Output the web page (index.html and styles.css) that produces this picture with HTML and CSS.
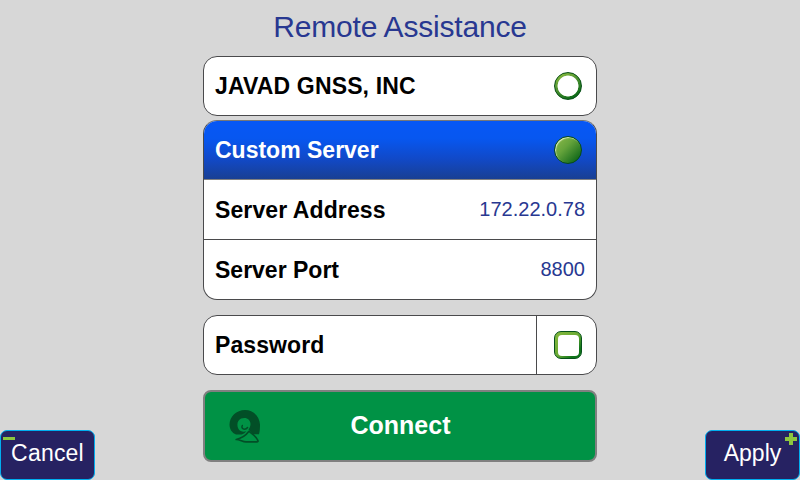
FILE: index.html
```
<!DOCTYPE html>
<html lang="en">
<head>
<meta charset="utf-8">
<title>Remote Assistance</title>
<link rel="stylesheet" href="styles.css">
</head>
<body>
<main class="screen">
  <h1 class="title"><span>Remote Assistance</span></h1>
  <section class="card vendor">
    <div class="row"><span class="label first">JAVAD GNSS, INC</span><span class="radio"></span></div>
  </section>
  <section class="card custom">
    <div class="row selected"><span class="label">Custom Server</span><span class="radio on"></span></div>
    <div class="row"><span class="label address">Server Address</span><span class="value">172.22.0.78</span></div>
    <div class="row"><span class="label">Server Port</span><span class="value">8800</span></div>
  </section>
  <section class="card password">
    <div class="row"><span class="label address">Password</span><span class="cell"><span class="check"></span></span></div>
  </section>
  <button class="connect">
    <svg class="logo" width="34" height="36" viewBox="0 0 34 36">
      <path fill="#024f27" d="M17 2C8.500 2 1.500 8.700 1.500 16.500C1.500 21 4 25 8 26.500L13.500 26.500C15.500 26 17.300 24.800 18.300 23.200C15.500 24.300 12 23.500 10.500 21C9 18.500 9 15 10.500 12.800C12 10.600 14 9.900 16.300 9.900C20 9.900 22.500 12.600 22.500 15.900C22.500 18 21.700 19.800 20.500 21.500L25 26.200H31C31.800 23.500 32 20 32 16.500C31.600 8.500 25.500 2 17 2Z"/>
      <path fill="none" stroke="#024f27" stroke-width="1.500" stroke-linecap="round" d="M14.300 17.500C13.200 19.500 14.500 21.200 16.500 21.200C17.800 21.200 18.900 20.500 19.600 19.500"/>
      <path fill="none" stroke="#024f27" stroke-width="1.700" stroke-linejoin="round" d="M8.200 31.500C13 30.500 17.800 27.500 21 23.300C24.500 25.800 28.500 29.300 29.800 32.300C30.600 34.200 28.800 33.900 26.500 33.900H18C14.500 33.900 12 31.500 8.200 31.500Z"/>
    </svg>
    <span class="connect-label">Connect</span>
  </button>
  <footer class="actions">
    <button class="key cancel"><i class="minus"></i><span>Cancel</span></button>
    <button class="key apply"><i class="plus"></i><span>Apply</span></button>
  </footer>
</main>
</body>
</html>
```
FILE: styles.css
```
* { box-sizing: border-box; }
body {
  margin: 0;
  background: #d7d7d7;
  font-family: "Liberation Sans", Arial, sans-serif;
}
.screen {
  width: 800px;
  height: 480px;
  overflow: hidden;
  display: flex;
  flex-direction: column;
  align-items: center;
}
.title {
  margin: 0;
  height: 56px;
  line-height: 54px;
  font-size: 30px;
  font-weight: 400;
  color: #283891;
  letter-spacing: -0.2px;
}
.card {
  width: 394px;
  flex: none;
  border: 1px solid #4a4a4c;
  border-radius: 14px;
  background: #fff;
  overflow: hidden;
}
.vendor { height: 60px; }
.custom { height: 180px; margin-top: 4px; border-top-color: #777; }
.password { height: 60px; margin-top: 15px; }
.row {
  height: 60px;
  padding: 0 11px;
  display: flex;
  align-items: center;
  justify-content: space-between;
  border-bottom: 1px solid #4a4a4c;
}
.row:last-child { height: 58px; border-bottom: 0; }
.custom .row:first-child { height: 59px; }
.custom .row:last-child { height: 59px; }
.row.selected {
  color: #fff;
  border-bottom-color: #808080;
  background: linear-gradient(#0757f5 0%, #0757f0 30%, #1149c8 65%, #193f93 100%);
}
.label { font-size: 23px; font-weight: 700; line-height: 28px; }
.first { letter-spacing: 0.15px; }
.address { letter-spacing: 0.1px; }
.value { font-size: 20px; line-height: 28px; color: #283891; margin-top: -2px; }
.radio, .check { width: 28px; height: 28px; margin-right: 3px; flex: none; border-radius: 50%; }
.radio {
  border: 1px solid #064f16;
  background: radial-gradient(circle, #fff 9.800px, #d9e9d3 10.300px, transparent 10.800px),
    linear-gradient(150deg, #85b83d 10%, #4c9030 45%, #0d6a18 85%);
}
.radio.on {
  border-color: #06491b;
  background: linear-gradient(135deg, #8dbb49, #65a33b 40%, #166c1c 85%);
  box-shadow: inset 1px 1px 1px #d9edbd;
}
.cell {
  width: 60px;
  height: 58px;
  margin-right: -11px;
  border-left: 1px solid #4a4a4c;
  display: flex;
  align-items: center;
  padding-left: 17px;
}
.check {
  margin: 0;
  border: 1px solid #06521b;
  border-radius: 7px;
  padding: 2.500px;
  background: linear-gradient(135deg, #85b83d, #6aaa34 50%, #10751b 80%);
}
.check::before {
  content: "";
  display: block;
  width: 21px;
  height: 21px;
  border-radius: 4px;
  background: #fff;
}
.connect {
  width: 394px;
  height: 72px;
  flex: none;
  margin: 15px 0 0;
  padding: 0;
  border: 2px solid #808080;
  border-radius: 8px;
  background: #009245;
  color: #fff;
  display: grid;
  grid-template-columns: 80px 1fr 80px;
  align-items: center;
  font: 700 25px/30px "Liberation Sans", Arial, sans-serif;
}
.connect-label { padding: 0 0 2px 1px; }
.logo { margin-left: 23px; }
.actions {
  width: 800px;
  height: 50px;
  margin-top: -32px;
  display: flex;
  justify-content: space-between;
  flex: none;
  pointer-events: none;
}
.key {
  position: relative;
  width: 95px;
  height: 50px;
  margin: 0;
  padding: 0 0 5px;
  border: 1px solid #00aeef;
  border-radius: 7px;
  background: #262262;
  color: #fff;
  font: 400 23px/28px "Liberation Sans", Arial, sans-serif;
  pointer-events: auto;
}
.cancel { letter-spacing: 0.2px; }
.minus, .plus::before, .plus::after {
  position: absolute;
  background: #8dc63f;
}
.minus { left: 2px; top: 6px; width: 12px; height: 3px; }
.plus::before { content: ""; right: 2px; top: 6px; width: 12px; height: 4px; }
.plus::after { content: ""; right: 6px; top: 2px; width: 4px; height: 12px; }
```
